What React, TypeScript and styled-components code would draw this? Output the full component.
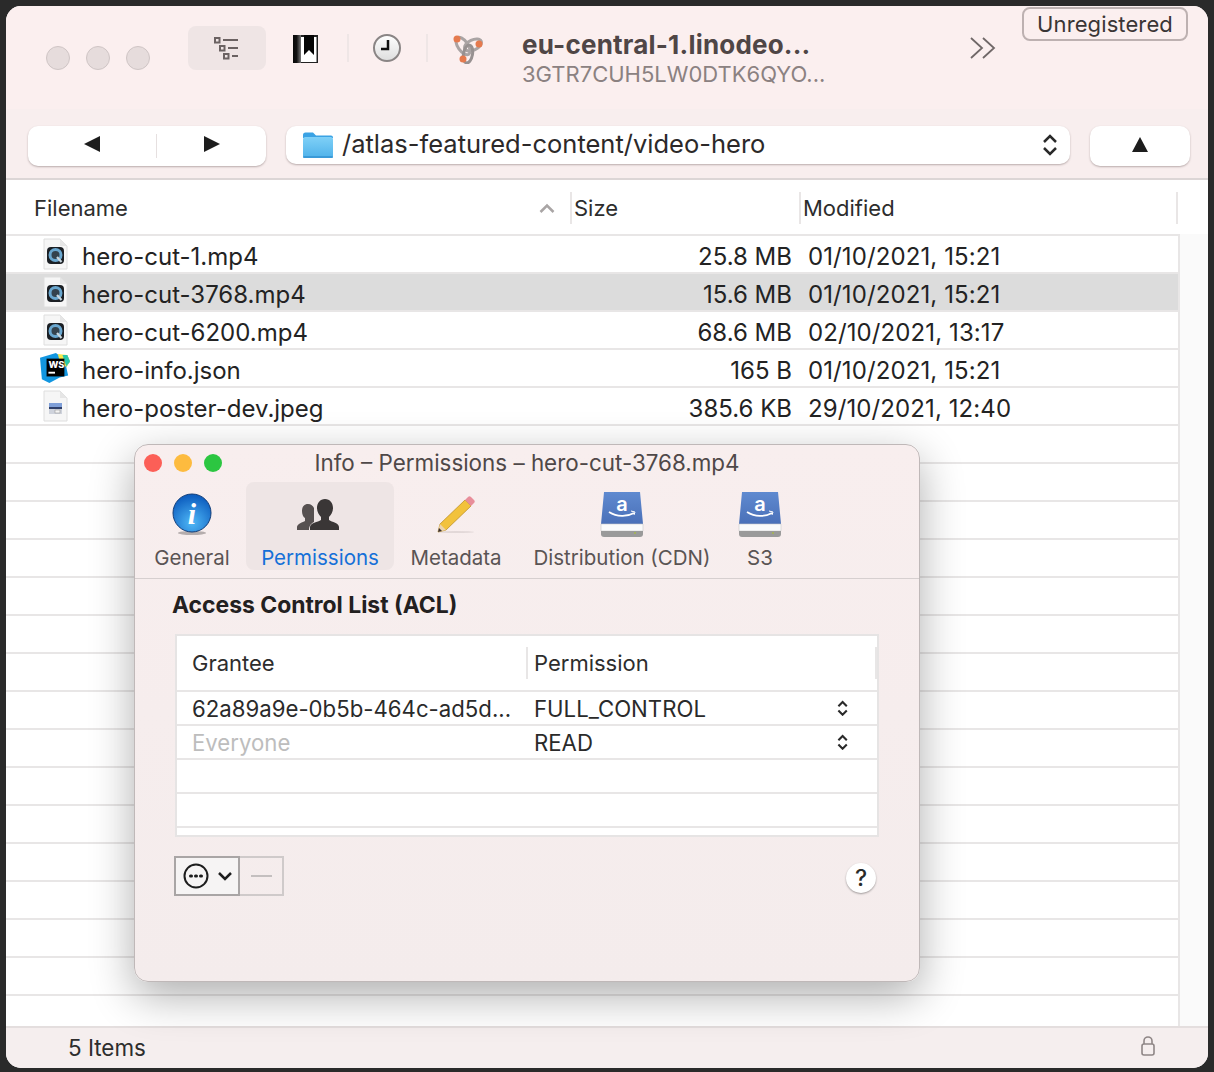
import React from 'react';
import styled, { createGlobalStyle } from 'styled-components';

const GlobalStyle = createGlobalStyle`
    html, body {
        margin: 0;
        padding: 0;
        background: #2a2a2a;
        width: 1214px;
        height: 1072px;
        overflow: hidden;
        font-family: "Inter", "Liberation Sans", sans-serif;
    }
`;

const Win = styled.div`
    position: relative;
    width: 1202px;
    height: 1062px;
    margin: 6px 0 0 6px;
    border-radius: 15px;
    overflow: hidden;
    background: #fff;
    display: flex;
    flex-direction: column;
`;

const TitleBar = styled.div`
    height: 103px;
    flex: none;
    box-sizing: border-box;
    padding: 1px 20px 0 40px;
    display: flex;
    align-items: flex-start;
    background: #fbefef;
`;

const Lights = styled.div`
    display: flex;
    gap: 16px;
    margin-top: 39px;
`;

const GreyLight = styled.span`
    width: 22px;
    height: 22px;
    border-radius: 50%;
    background: #e6dcdc;
    border: 1px solid #cfc5c5;
`;

const ViewButton = styled.div`
    width: 78px;
    height: 44px;
    margin: 19px 0 0 38px;
    border-radius: 8px;
    background: #efe5e5;
    display: flex;
    align-items: center;
    justify-content: center;
`;

const ToolIcon = styled.div<{ $left: number }>`
    margin: 27px 0 0 ${p => p.$left}px;
    height: 30px;
    display: flex;
    align-items: center;
`;

const ToolDivider = styled.div<{ $left: number }>`
    width: 2px;
    height: 28px;
    margin: 27px 0 0 ${p => p.$left}px;
    background: #efe6e6;
`;

const TitleBlock = styled.div`
    width: 400px;
    margin: 22px 0 0 39px;
`;

const HostName = styled.div`
    font-size: 26px;
    line-height: 32px;
    font-weight: 700;
    letter-spacing: 0.2px;
    color: #4f4646;
    white-space: nowrap;
`;

const KeyName = styled.div`
    font-size: 22px;
    line-height: 28px;
    margin-top: -1px;
    color: #8b8181;
    white-space: nowrap;
`;

const Overflow = styled.div`
    margin: 28px 0 0 48px;
    height: 28px;
`;

const Unregistered = styled.div`
    margin-left: auto;
    width: 166px;
    height: 34px;
    box-sizing: border-box;
    border: 2px solid #bdb1b1;
    border-radius: 8px;
    font-size: 22px;
    letter-spacing: 0.1px;
    line-height: 31px;
    text-align: center;
    color: #3a3535;
`;

const PathBar = styled.div`
    height: 71px;
    flex: none;
    box-sizing: border-box;
    padding: 17px 18px 0 22px;
    display: flex;
    gap: 20px;
    background: #f8eeee;
    border-bottom: 2px solid #dcd6d6;
`;

const PillButton = styled.div<{ $width: number; $height?: number }>`
    width: ${p => p.$width}px;
    height: ${p => p.$height ?? 40}px;
    box-sizing: border-box;
    background: #fff;
    border-radius: 10px;
    box-shadow: 0 1px 2px rgba(70, 50, 50, 0.35);
    display: flex;
    align-items: center;
`;

const NavHalf = styled.div<{ $width: number }>`
    width: ${p => p.$width}px;
    height: 24px;
    display: flex;
    align-items: center;
    justify-content: center;
    & + & {
        border-left: 1px solid #e6e0e0;
    }
`;

const PathPopup = styled(PillButton)`
    padding: 0 12px 0 17px;
    gap: 9px;
`;

const PathText = styled.div`
    flex: 1;
    font-size: 25.5px;
    padding-bottom: 4px;
    color: #2c2929;
    white-space: nowrap;
`;

const UpButton = styled(PillButton)`
    justify-content: center;
`;

const Triangle = styled.span<{ $dir: 'left' | 'right' | 'up' }>`
    width: 0;
    height: 0;
    margin-bottom: 4px;
    ${p => p.$dir === 'up' && 'border-left: 8px solid transparent; border-right: 8px solid transparent; border-bottom: 15px solid #1d1d1d;'}
    ${p => p.$dir === 'left' && 'border-top: 8px solid transparent; border-bottom: 8px solid transparent; border-right: 16px solid #1d1d1d;'}
    ${p => p.$dir === 'right' && 'border-top: 8px solid transparent; border-bottom: 8px solid transparent; border-left: 16px solid #1d1d1d;'}
`;

const ColumnHeader = styled.div`
    height: 54px;
    flex: none;
    box-sizing: border-box;
    padding-top: 2px;
    display: grid;
    grid-template-columns: 566px 229px 377px;
    align-items: center;
    font-size: 22px;
    color: #2d2d2d;
    background: #fff;
`;

const HeaderCell = styled.div`
    height: 32px;
    display: flex;
    align-items: center;
    justify-content: space-between;
    box-sizing: border-box;
    padding-left: 2px;
    border-right: 2px solid #e9e6e6;
    &:first-child {
        padding: 0 15px 0 28px;
    }
`;

const ListArea = styled.div`
    flex: 1;
    min-height: 0;
    display: flex;
`;

const FileList = styled.div`
    width: 1172px;
    border-top: 2px solid #e8e6e6;
    overflow: hidden;
`;

const Gutter = styled.div`
    flex: 1;
    background: #fafafa;
    border-left: 2px solid #e8e6e6;
`;

const Row = styled.div<{ $selected?: boolean }>`
    height: 38px;
    box-sizing: border-box;
    display: grid;
    grid-template-columns: 76px 550px 160px 1fr;
    align-items: center;
    font-size: 24px;
    color: #232323;
    background: ${p => (p.$selected ? '#dcdcdc' : '#fff')};
    border-bottom: 2px solid #e8e6e6;
`;

const RowIcon = styled.div`
    display: flex;
    justify-content: center;
    padding-left: 24px;
    margin-left: -2px;
`;

const RowName = styled.div`
    padding-top: 4px;
`;

const RowSize = styled(RowName)`
    text-align: right;
`;

const RowDate = styled(RowName)`
    padding-left: 16px;
    letter-spacing: 0.1px;
`;

const StatusBar = styled.div`
    height: 42px;
    flex: none;
    box-sizing: border-box;
    border-top: 2px solid #e4dede;
    padding: 0 53px 2px 62px;
    display: flex;
    align-items: center;
    justify-content: space-between;
    font-size: 22.4px;
    color: #2d2d2d;
    background: #f5eeee;
    svg {
        margin-bottom: 2px;
    }
`;

const Dialog = styled.div`
    position: absolute;
    left: 128px;
    top: 438px;
    width: 786px;
    height: 538px;
    box-sizing: border-box;
    border-radius: 14px;
    background: linear-gradient(#f8eeee, #f4ecec);
    border: 1px solid #bfb8b8;
    box-shadow: 0 14px 44px rgba(0, 0, 0, 0.32);
    display: flex;
    flex-direction: column;
`;

const DialogTitle = styled.div`
    position: relative;
    height: 37px;
    flex: none;
    font-size: 22.4px;
    line-height: 36px;
    text-align: center;
    color: #4f4848;
`;

const DialogLights = styled.div`
    position: absolute;
    left: 9px;
    top: 9px;
    display: flex;
    gap: 12px;
`;

const Light = styled.span<{ $color: string }>`
    width: 18px;
    height: 18px;
    border-radius: 50%;
    background: ${p => p.$color};
`;

const Tabs = styled.div`
    height: 97px;
    flex: none;
    box-sizing: border-box;
    border-bottom: 1px solid #d6cfcf;
    display: flex;
    padding-left: 3px;
`;

const Tab = styled.div<{ $width: number; $active?: boolean }>`
    width: ${p => p.$width}px;
    height: 88px;
    border-radius: 8px;
    background: ${p => (p.$active ? '#eee5e5' : 'transparent')};
    display: flex;
    flex-direction: column;
    align-items: center;
    font-size: 20.5px;
    color: ${p => (p.$active ? '#1570d8' : '#5a5454')};
    white-space: nowrap;
`;

const TabIcon = styled.div`
    height: 65px;
    box-sizing: border-box;
    padding-top: 3px;
    margin-bottom: 1px;
    display: flex;
    align-items: center;
    justify-content: center;
`;

const DialogBody = styled.div`
    flex: 1;
    padding: 0 40px 0 37px;
    display: flex;
    flex-direction: column;
`;

const AclHeading = styled.div`
    font-size: 22.9px;
    font-weight: 700;
    line-height: 28px;
    margin: 12px 0 15px;
    color: #232020;
`;

const AclTable = styled.div`
    margin-left: 3px;
    width: 704px;
    height: 203px;
    flex: none;
    box-sizing: border-box;
    background: #fff;
    border: 2px solid #e6e4e4;
    overflow: hidden;
`;

const AclHeader = styled.div`
    height: 56px;
    box-sizing: border-box;
    display: grid;
    grid-template-columns: 349px 1fr;
    align-items: center;
    font-size: 22px;
    color: #2d2d2d;
    border-bottom: 2px solid #e8e6e6;
`;

const AclHeadCell = styled.div`
    height: 32px;
    line-height: 32px;
    padding-left: 15px;
    box-sizing: border-box;
    & + & {
        padding-left: 6px;
        border-left: 2px solid #e8e6e6;
        border-right: 2px solid #e8e6e6;
    }
`;

const AclRow = styled.div`
    height: 34px;
    box-sizing: border-box;
    display: grid;
    grid-template-columns: 357px 1fr 40px;
    align-items: center;
    font-size: 22.2px;
    color: #2a2a2a;
    border-bottom: 2px solid #e8e6e6;
`;

const Grantee = styled.div<{ $muted?: boolean }>`
    padding-left: 15px;
    white-space: nowrap;
    color: ${p => (p.$muted ? '#bdbdbd' : 'inherit')};
`;

const Footer = styled.div`
    margin: 19px 0 0 2px;
    width: 706px;
    display: flex;
    align-items: center;
    justify-content: space-between;
`;

const ButtonGroup = styled.div`
    display: flex;
    height: 40px;
`;

const ActionButton = styled.div`
    width: 66px;
    box-sizing: border-box;
    border: 2px solid #a9a5a5;
    background: #f6f4f4;
    display: flex;
    align-items: center;
    justify-content: center;
    gap: 9px;
`;

const RemoveButton = styled.div`
    width: 44px;
    box-sizing: border-box;
    border: 2px solid #cfcaca;
    border-left: none;
    display: flex;
    align-items: center;
    justify-content: center;
`;

const RemoveDash = styled.span`
    width: 21px;
    height: 2px;
    background: #c4bfbf;
`;

const HelpButton = styled.div`
    width: 30px;
    height: 30px;
    margin: 4px 4px 0 0;
    border-radius: 50%;
    background: #fff;
    box-shadow: 0 1px 2px rgba(0, 0, 0, 0.35);
    font-size: 23px;
    font-weight: 500;
    line-height: 30px;
    text-align: center;
    color: #2a2a2a;
`;

// --- icons ---

const OutlineIcon = () => (
    <svg width="26" height="24" viewBox="0 0 26 24" fill="none" stroke="#6b6262" strokeWidth="2">
        <rect x="1" y="2" width="4.500" height="4.500" />
        <rect x="6" y="10" width="4.500" height="4.500" />
        <rect x="10" y="18" width="4.500" height="4.500" />
        <path d="M9 4h15M14 12h10M18 20h6" />
    </svg>
);

const BookmarkIcon = () => (
    <svg width="25" height="28" viewBox="0 0 25 28">
        <defs>
            <linearGradient id="bm" x1="0" x2="1" y1="0" y2="0">
                <stop offset="0" stopColor="#080808" />
                <stop offset="0.45" stopColor="#111" />
                <stop offset="1" stopColor="#777" />
            </linearGradient>
        </defs>
        <rect width="8" height="28" fill="url(#bm)" />
        <rect x="8" width="17" height="28" fill="#fff" />
        <path d="M8 0h17v2H8zM23.500 0H25v28h-1.500zM8 27h17v1H8z" fill="#222" />
        <path d="M11 0h10v20l-5-5-5 5z" fill="#050505" />
    </svg>
);

const ClockIcon = () => (
    <svg width="30" height="30" viewBox="0 0 30 30">
        <defs>
            <linearGradient id="clk" x1="0" x2="0" y1="0" y2="1">
                <stop offset="0" stopColor="#fff" />
                <stop offset="1" stopColor="#ddd" />
            </linearGradient>
        </defs>
        <circle cx="15" cy="14" r="13" fill="url(#clk)" stroke="#8a8585" strokeWidth="2" />
        <path d="M16 6v9h-7" fill="none" stroke="#111" strokeWidth="2.500" />
    </svg>
);

const LogoIcon = () => (
    <svg width="32" height="30" viewBox="0 0 32 30" fill="none" stroke="#aaa4a4" strokeWidth="3">
        <ellipse cx="12" cy="12" rx="5" ry="10" transform="rotate(-35 12 12)" />
        <ellipse cx="22" cy="11" rx="5" ry="9" transform="rotate(65 22 11)" />
        <ellipse cx="17" cy="20" rx="4.500" ry="9" transform="rotate(10 17 20)" stroke="#979191" />
        <circle cx="6" cy="5" r="3.500" fill="#e57a4e" stroke="none" />
        <circle cx="28" cy="10" r="3.500" fill="#e57a4e" stroke="none" />
        <circle cx="12" cy="25" r="3.500" fill="#e57a4e" stroke="none" />
    </svg>
);

const DoubleChevron = () => (
    <svg width="26" height="26" viewBox="0 0 26 26" fill="none" stroke="#706868" strokeWidth="1.800">
        <path d="M1 3l11 10L1 23M13 3l11 10-11 10" />
    </svg>
);

const FolderIcon = () => (
    <svg width="30" height="26" viewBox="0 0 30 26">
        <defs>
            <linearGradient id="fld" x1="0" x2="0" y1="0" y2="1">
                <stop offset="0" stopColor="#7fd0f7" />
                <stop offset="1" stopColor="#4fb2ea" />
            </linearGradient>
        </defs>
        <path d="M0 3a2.500 2.500 0 0 1 2.500-2.500h7.500l3 3h15a2 2 0 0 1 2 2V6H0z" fill="#3aa2e4" />
        <rect y="5" width="30" height="21" rx="2.500" fill="url(#fld)" />
        <rect y="24" width="30" height="2" rx="1" fill="#3a9ad8" />
    </svg>
);

const UpDown = ({ size = 1, weight = 2.5 }: { size?: number; weight?: number }) => (
    <svg width={16 * size} height={24 * size} viewBox="0 0 16 24" fill="none" stroke="#2a2a2a" strokeWidth={weight}>
        <path d="M2 9l6-6 6 6M2 15l6 6 6-6" />
    </svg>
);

const SortCaret = () => (
    <svg width="16" height="10" viewBox="0 0 16 10" fill="none" stroke="#a9a5a5" strokeWidth="2.500">
        <path d="M1.500 9L8 2.500 14.500 9" />
    </svg>
);

const PageShape = () => (
    <>
        <path d="M1 1h16l7 7v23H1z" fill="#f6f6f6" stroke="#dedede" />
        <path d="M17 1v7h7" fill="#e6e6e6" />
    </>
);

const VideoIcon = () => (
    <svg width="25" height="32" viewBox="0 0 25 32">
        <PageShape />
        <rect x="4" y="9" width="17" height="17" rx="4" fill="#1b1f24" />
        <circle cx="12.500" cy="17" r="5.500" fill="#34424d" stroke="#6aa7cf" strokeWidth="3" />
        <path d="M14 19l4.500 5" stroke="#c8d6df" strokeWidth="2.200" />
    </svg>
);

const WebStormIcon = () => (
    <svg width="30" height="30" viewBox="0 0 32 32">
        <path d="M0 5l17-5 4 3 8-1 3 7-4 6 2 9-9 2-11 6-8-4z" fill="#1296e0" />
        <path d="M19 1l10 1 3 7-4 6-7-6z" fill="#f5e94a" />
        <path d="M24 2l5 0 3 7-4 5z" fill="#27c7ae" />
        <rect x="7" y="6" width="19" height="19" fill="#000" />
        <text x="9" y="16" fontFamily="Inter, sans-serif" fontWeight="800" fontSize="10" fill="#fff">WS</text>
        <rect x="9" y="20" width="7" height="2" fill="#fff" />
    </svg>
);

const ImageIcon = () => (
    <svg width="25" height="32" viewBox="0 0 25 32">
        <PageShape />
        <rect x="6" y="13" width="13" height="4" fill="#7f9fd8" />
        <rect x="6" y="17" width="13" height="2" fill="#2e3f6a" />
        <rect x="6" y="19" width="13" height="5" fill="#cfd3dc" />
        <rect x="12" y="20" width="5" height="3" fill="#f4f4f4" stroke="#8a8a8a" strokeWidth="0.500" />
    </svg>
);

const InfoIcon = () => (
    <svg width="40" height="44" viewBox="0 0 40 44">
        <defs>
            <radialGradient id="info" cx="0.5" cy="0.75" r="0.7">
                <stop offset="0" stopColor="#4fb8f7" />
                <stop offset="1" stopColor="#0e5fc0" />
            </radialGradient>
        </defs>
        <ellipse cx="20" cy="40" rx="14" ry="2" fill="#b5adad" />
        <circle cx="20" cy="20" r="19" fill="url(#info)" stroke="#123d78" />
        <text x="20" y="31" textAnchor="middle" fontFamily="Liberation Serif, serif" fontStyle="italic" fontWeight="700" fontSize="30" fill="#fff">i</text>
    </svg>
);

const PeopleIcon = () => (
    <svg width="46" height="32" viewBox="0 0 46 32" fill="#3a3636">
        <path d="M0 31v-3c0-3 6-5 8-6v-3c-2-1-3-4-3-7 0-4 2-7 6-7 3 0 5 2 6 4v14c-4 2-5 5-5 8z" fill="#565050" />
        <path d="M13 31v-3c0-4 8-5 11-7v-3c-2-2-4-5-4-9 0-5 3-9 8-9s8 4 8 9c0 4-2 7-4 9v3c3 2 10 3 10 7v3z" />
    </svg>
);

const PencilIcon = () => (
    <svg width="40" height="40" viewBox="0 0 40 40">
        <ellipse cx="20" cy="37" rx="18" ry="1" fill="#e2d8d8" />
        <path d="M2 37l2-8L29 5l6 6-25 24z" fill="#f2c23c" stroke="#b98a1d" strokeWidth="0.700" />
        <path d="M2 37l2-8 6 6z" fill="#ecd3ac" />
        <path d="M2 37l1-4 3 3z" fill="#3a3030" />
        <path d="M29 5l3-3c1-1 2-1 3 0l3 3c1 1 1 2 0 3l-3 3z" fill="#e88e9a" />
    </svg>
);

const DriveIcon = () => (
    <svg width="44" height="46" viewBox="0 0 44 46">
        <defs>
            <linearGradient id="drv" x1="0" x2="0" y1="0" y2="1">
                <stop offset="0" stopColor="#5f8ad0" />
                <stop offset="1" stopColor="#4a70b8" />
            </linearGradient>
        </defs>
        <path d="M4 0h36l3 32H1z" fill="url(#drv)" />
        <text x="22" y="19" textAnchor="middle" fontFamily="Inter, sans-serif" fontWeight="600" fontSize="20" fill="#fff">a</text>
        <path d="M9 20c8 5 18 5 25 1" fill="none" stroke="#fff" strokeWidth="1.800" />
        <path d="M31 19l4 1-1 3" fill="none" stroke="#fff" strokeWidth="1" />
        <path d="M1 32h42v7H1z" fill="#fbfbfb" stroke="#c9c9c9" strokeWidth="0.600" />
        <path d="M1 39h42v3a3 3 0 0 1-3 3H4a3 3 0 0 1-3-3z" fill="#9a9a9a" />
        <circle cx="35" cy="41" r="1" fill="#a5b64a" />
    </svg>
);

const MoreIcon = () => (
    <svg width="26" height="26" viewBox="0 0 26 26" fill="none" stroke="#1d1d1d" strokeWidth="2">
        <circle cx="13" cy="13" r="11.500" />
        <path d="M7.500 13h1M12.500 13h1M17.500 13h1" strokeWidth="3" strokeLinecap="round" />
    </svg>
);

const DownChevron = () => (
    <svg width="14" height="10" viewBox="0 0 14 10" fill="none" stroke="#1d1d1d" strokeWidth="2.500">
        <path d="M1 2l6 6 6-6" />
    </svg>
);

const LockIcon = () => (
    <svg width="14" height="20" viewBox="0 0 14 20" fill="none" stroke="#8f8686" strokeWidth="1.600">
        <rect x="1" y="8" width="12" height="11" rx="2" />
        <path d="M3 8V5a4 4 0 0 1 8 0v3" />
    </svg>
);

// --- data ---

const files = [
    { name: 'hero-cut-1.mp4', size: '25.8 MB', date: '01/10/2021, 15:21', icon: <VideoIcon /> },
    { name: 'hero-cut-3768.mp4', size: '15.6 MB', date: '01/10/2021, 15:21', icon: <VideoIcon />, selected: true },
    { name: 'hero-cut-6200.mp4', size: '68.6 MB', date: '02/10/2021, 13:17', icon: <VideoIcon /> },
    { name: 'hero-info.json', size: '165 B', date: '01/10/2021, 15:21', icon: <WebStormIcon /> },
    { name: 'hero-poster-dev.jpeg', size: '385.6 KB', date: '29/10/2021, 12:40', icon: <ImageIcon /> },
];

const emptyRows = Array.from({ length: 15 }, (_, i) => i);

const tabs = [
    { label: 'General', width: 108, icon: <InfoIcon /> },
    { label: 'Permissions', width: 148, icon: <PeopleIcon />, active: true },
    { label: 'Metadata', width: 124, icon: <PencilIcon /> },
    { label: 'Distribution (CDN)', width: 208, icon: <DriveIcon /> },
    { label: 'S3', width: 68, icon: <DriveIcon /> },
];

const App = () => {
    return (
        <>
            <GlobalStyle />
            <Win>
                <TitleBar>
                    <Lights>
                        <GreyLight />
                        <GreyLight />
                        <GreyLight />
                    </Lights>
                    <ViewButton><OutlineIcon /></ViewButton>
                    <ToolIcon $left={27}><BookmarkIcon /></ToolIcon>
                    <ToolDivider $left={29} />
                    <ToolIcon $left={23}><ClockIcon /></ToolIcon>
                    <ToolDivider $left={24} />
                    <ToolIcon $left={23}><LogoIcon /></ToolIcon>
                    <TitleBlock>
                        <HostName>eu-central-1.linodeo...</HostName>
                        <KeyName>3GTR7CUH5LW0DTK6QYO...</KeyName>
                    </TitleBlock>
                    <Overflow><DoubleChevron /></Overflow>
                    <Unregistered>Unregistered</Unregistered>
                </TitleBar>
                <PathBar>
                    <PillButton $width={238}>
                        <NavHalf $width={129}><Triangle $dir="left" /></NavHalf>
                        <NavHalf $width={109}><Triangle $dir="right" /></NavHalf>
                    </PillButton>
                    <PathPopup $width={784} $height={38}>
                        <FolderIcon />
                        <PathText>/atlas-featured-content/video-hero</PathText>
                        <UpDown />
                    </PathPopup>
                    <UpButton $width={100}><Triangle $dir="up" /></UpButton>
                </PathBar>
                <ColumnHeader>
                    <HeaderCell>Filename<SortCaret /></HeaderCell>
                    <HeaderCell>Size</HeaderCell>
                    <HeaderCell>Modified</HeaderCell>
                </ColumnHeader>
                <ListArea>
                    <FileList>
                        {files.map(f => (
                            <Row key={f.name} $selected={f.selected}>
                                <RowIcon>{f.icon}</RowIcon>
                                <RowName>{f.name}</RowName>
                                <RowSize>{f.size}</RowSize>
                                <RowDate>{f.date}</RowDate>
                            </Row>
                        ))}
                        {emptyRows.map(i => <Row key={i} />)}
                    </FileList>
                    <Gutter />
                </ListArea>
                <StatusBar>
                    <span>5 Items</span>
                    <LockIcon />
                </StatusBar>
                <Dialog>
                    <DialogTitle>
                        <DialogLights>
                            <Light $color="#fc5f57" />
                            <Light $color="#fdbb3f" />
                            <Light $color="#2cc641" />
                        </DialogLights>
                        Info – Permissions – hero-cut-3768.mp4
                    </DialogTitle>
                    <Tabs>
                        {tabs.map(t => (
                            <Tab key={t.label} $width={t.width} $active={t.active}>
                                <TabIcon>{t.icon}</TabIcon>
                                {t.label}
                            </Tab>
                        ))}
                    </Tabs>
                    <DialogBody>
                        <AclHeading>Access Control List (ACL)</AclHeading>
                        <AclTable>
                            <AclHeader>
                                <AclHeadCell>Grantee</AclHeadCell>
                                <AclHeadCell>Permission</AclHeadCell>
                            </AclHeader>
                            <AclRow>
                                <Grantee>62a89a9e-0b5b-464c-ad5d...</Grantee>
                                <div>FULL_CONTROL</div>
                                <UpDown size={0.7} weight={3} />
                            </AclRow>
                            <AclRow>
                                <Grantee $muted>Everyone</Grantee>
                                <div>READ</div>
                                <UpDown size={0.7} weight={3} />
                            </AclRow>
                            <AclRow />
                            <AclRow />
                        </AclTable>
                        <Footer>
                            <ButtonGroup>
                                <ActionButton><MoreIcon /><DownChevron /></ActionButton>
                                <RemoveButton><RemoveDash /></RemoveButton>
                            </ButtonGroup>
                            <HelpButton>?</HelpButton>
                        </Footer>
                    </DialogBody>
                </Dialog>
            </Win>
        </>
    );
};

export default App;
